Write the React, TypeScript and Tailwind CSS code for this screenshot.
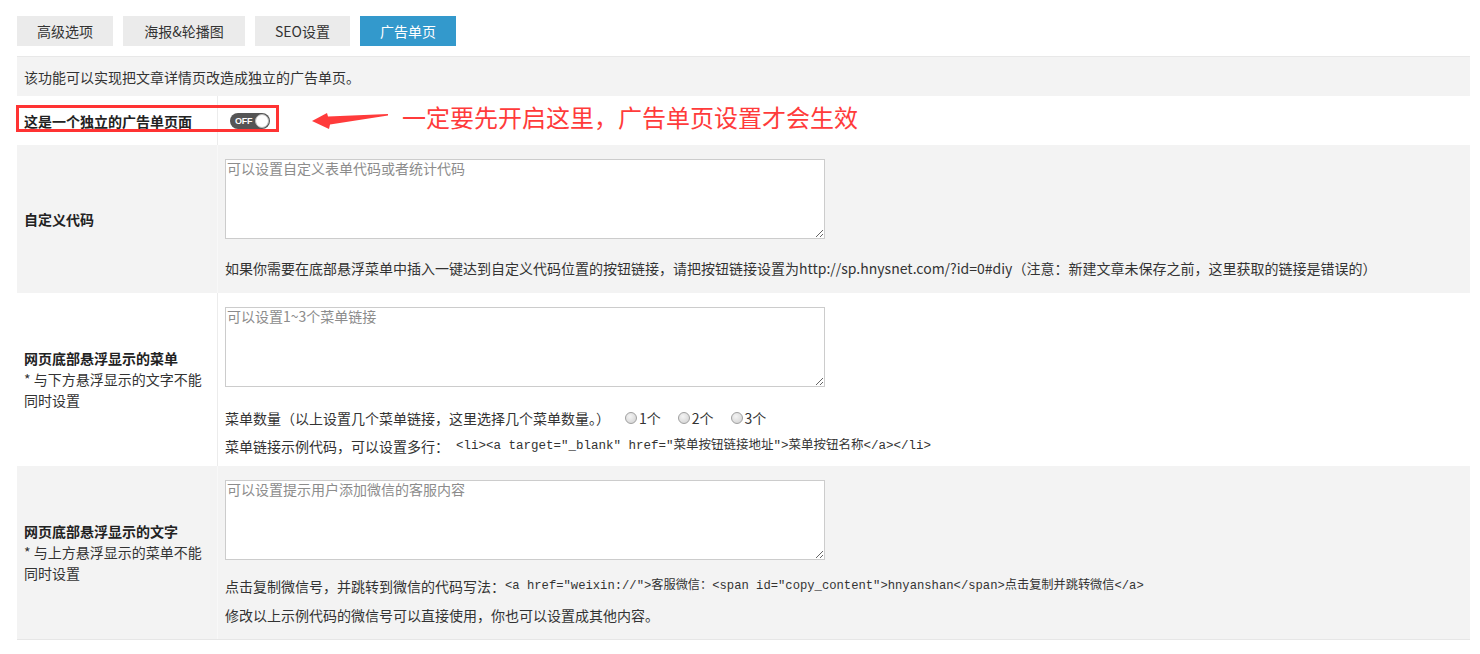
import React from "react";

const FONT = '"Noto Sans CJK SC", "Noto Sans", sans-serif';
const MONO = '"Liberation Mono", "Noto Sans CJK SC", monospace';

function Tab({ label, active, w }: { label: string; active?: boolean; w: string }) {
  return (
    <div
      className={
        "h-[30px] flex items-center justify-center text-[14px] leading-none " +
        w +
        " " +
        (active ? "bg-[#3399cc] text-white" : "bg-[#ebebeb] text-[#333]")
      }
    >
      {label}
    </div>
  );
}

function Toggle() {
  return (
    <div className="w-[40px] h-[16px] rounded-full bg-[#555] flex items-center justify-between pl-[5px] pr-[1px]">
      <span className="text-white text-[9px] font-bold leading-none tracking-[-0.2px]" style={{ fontFamily: '"Liberation Sans", sans-serif' }}>
        OFF
      </span>
      <span className="w-[14px] h-[14px] rounded-full bg-white border border-[#bbb]" />
    </div>
  );
}

function Radio({ label }: { label: string }) {
  return (
    <span className="flex items-center">
      <span className="w-[12px] h-[12px] rounded-full border border-[#a0a0a0] bg-[radial-gradient(circle_at_40%_35%,#f4f4f4,#cfcfcf)]" />
      <span className="ml-[2px]">{label}</span>
    </span>
  );
}

function Area({ placeholder }: { placeholder: string }) {
  return (
    <textarea
      className="block w-[600px] h-[80px] bg-white border border-[#cccccc] px-[1px] pt-0 pb-[1px] text-[14px] leading-[17px] text-[#333] placeholder:text-[#8c8c8c] outline-none"
      placeholder={placeholder}
      style={{ fontFamily: FONT }}
    />
  );
}

export default function App() {
  return (
    <div className="bg-white w-[1480px] h-[654px] pt-[16px] pl-[17px] pr-[10px] text-[#333]" style={{ fontFamily: FONT }}>
      <div className="flex gap-[10px]">
        <Tab label="高级选项" w="w-[96px]" />
        <Tab label="海报&轮播图" w="w-[122px]" />
        <Tab label="SEO设置" w="w-[95px]" />
        <Tab label="广告单页" w="w-[96px]" active />
      </div>

      <div className="mt-[10px] border-t border-[#e8e8e8] border-b border-b-[#e6e6e6]">
        {/* description */}
        <div className="h-[39px] bg-[#f3f3f3] flex items-center px-[7px] text-[14px] leading-[20px]">
          该功能可以实现把文章详情页改造成独立的广告单页。
        </div>

        {/* toggle row */}
        <div className="relative h-[49px] bg-white flex">
          <div className="w-[201px] shrink-0 border-r border-[#ececec] flex items-center pl-[7px] pt-[1px] text-[14px] font-bold text-[#222]">
            这是一个独立的广告单页面
          </div>
          <div className="flex items-center pl-[12px] pt-[1px]">
            <Toggle />
            <svg className="ml-[41px]" width="78" height="20" viewBox="0 0 78 20">
              <polygon points="1,10 16,2 17,5.5 77,3 77,4.5 19,13.5 18,18" fill="#ff3b3b" />
            </svg>
            <span className="ml-[13px] mb-[8px] text-[24px] leading-none text-[#ff3b3b]">
              一定要先开启这里，广告单页设置才会生效
            </span>
          </div>
          <div className="absolute left-[-1px] top-[9px] w-[263px] h-[27px] border-[3px] border-[#ff3333]" />
        </div>

        {/* custom code */}
        <div className="h-[148px] bg-[#f3f3f3] flex">
          <div className="w-[201px] shrink-0 border-r border-[#f8f8f8] flex items-center pl-[7px] text-[14px] font-bold text-[#222]">
            自定义代码
          </div>
          <div className="pl-[7px] pt-[14px] text-[14px] leading-[20px]">
            <Area placeholder="可以设置自定义表单代码或者统计代码" />
            <p className="mt-[19px] whitespace-nowrap">
              如果你需要在底部悬浮菜单中插入一键达到自定义代码位置的按钮链接，请把按钮链接设置为http://sp.hnysnet.com/?id=0#diy（注意：新建文章未保存之前，这里获取的链接是错误的）
            </p>
          </div>
        </div>

        {/* menu */}
        <div className="h-[173px] bg-white flex">
          <div className="w-[201px] shrink-0 border-r border-[#ececec] flex flex-col justify-center pl-[7px] text-[14px] leading-[21px]">
            <div className="font-bold text-[#222]">网页底部悬浮显示的菜单</div>
            <div>* 与下方悬浮显示的文字不能</div>
            <div>同时设置</div>
          </div>
          <div className="pl-[7px] pt-[14px] text-[14px] leading-[20px]">
            <Area placeholder="可以设置1~3个菜单链接" />
            <div className="mt-[21px] flex items-center whitespace-nowrap">
              <span>菜单数量（以上设置几个菜单链接，这里选择几个菜单数量。）</span>
              <span className="ml-[15px] flex gap-[17px]">
                <Radio label="1个" />
                <Radio label="2个" />
                <Radio label="3个" />
              </span>
            </div>
            <div className="mt-[8px] whitespace-nowrap flex items-center">
              <span>菜单链接示例代码，可以设置多行：</span>
              <span className="ml-[7px] text-[12.5px]" style={{ fontFamily: MONO }}>
                {'<li><a target="_blank" href="菜单按钮链接地址">菜单按钮名称</a></li>'}
              </span>
            </div>
          </div>
        </div>

        {/* text */}
        <div className="h-[173px] bg-[#f3f3f3] flex">
          <div className="w-[201px] shrink-0 border-r border-[#f8f8f8] flex flex-col justify-center pl-[7px] text-[14px] leading-[21px]">
            <div className="font-bold text-[#222]">网页底部悬浮显示的文字</div>
            <div>* 与上方悬浮显示的菜单不能</div>
            <div>同时设置</div>
          </div>
          <div className="pl-[7px] pt-[14px] text-[14px] leading-[20px]">
            <Area placeholder="可以设置提示用户添加微信的客服内容" />
            <div className="mt-[16px] whitespace-nowrap flex items-center">
              <span>点击复制微信号，并跳转到微信的代码写法：</span>
              <span className="text-[12.2px]" style={{ fontFamily: MONO }}>
                {'<a href="weixin://">客服微信：<span id="copy_content">hnyanshan</span>点击复制并跳转微信</a>'}
              </span>
            </div>
            <p className="mt-[9px] whitespace-nowrap">修改以上示例代码的微信号可以直接使用，你也可以设置成其他内容。</p>
          </div>
        </div>
      </div>
    </div>
  );
}
